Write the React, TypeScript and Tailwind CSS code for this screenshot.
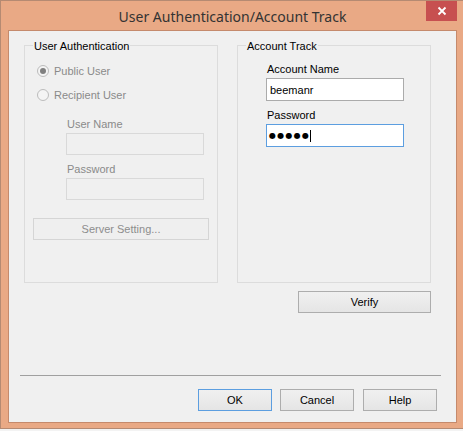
const font = { fontFamily: '"Liberation Sans", Arial, sans-serif' };

const Radio = ({ checked, label }: { checked?: boolean; label: string }) => (
  <div className="flex items-center h-[14px]">
    <span className="w-[12px] h-[12px] rounded-full border border-[#bcbcbc] bg-[#f4f4f4] flex items-center justify-center">
      {checked && <span className="w-[6px] h-[6px] rounded-full bg-[#808080]" />}
    </span>
    <span className="ml-[5px] text-[#8a8a8a]">{label}</span>
  </div>
);

const Btn = ({ label, focused, disabled, className }: { label: string; focused?: boolean; disabled?: boolean; className?: string }) => (
  <button
    className={
      "h-[22px] flex items-center justify-center border " +
      (disabled
        ? "border-[#d5d5d5] bg-[#efefef] text-[#8d8d8d] "
        : focused
        ? "border-[#5c9ee0] bg-gradient-to-b from-[#f0f0f0] to-[#e5e5e5] text-black "
        : "border-[#adadad] bg-gradient-to-b from-[#f0f0f0] to-[#e5e5e5] text-black ") +
      (className ?? "")
    }
  >
    {label}
  </button>
);

const App = () => {
  return (
    <div className="w-[463px] h-[431px] overflow-hidden bg-[#f3f3f3] text-[11px] leading-[14px]" style={font}>
      <div className="w-[465px] h-[429px] border border-[#b58a72] bg-[#e9a985] flex flex-col">
        {/* title bar */}
        <div className="relative h-[29px] flex items-center justify-center">
          <span className="text-[14px] text-[#333] pt-[2px]" style={{ fontFamily: '"Noto Sans", sans-serif' }}>
            User Authentication/Account Track
          </span>
          <div className="absolute top-0 right-[7px] w-[31px] h-[20px] bg-[#c75050] flex items-center justify-center">
            <svg width="10" height="10" viewBox="0 0 10 10">
              <path d="M1.5 1.5 L8.5 8.5 M8.5 1.5 L1.5 8.5" stroke="white" strokeWidth="1.8" />
            </svg>
          </div>
        </div>

        {/* client area */}
        <div className="ml-[7px] w-[449px] h-[393px] border border-[#c58a6c] bg-[#f0f0f0] flex flex-col">
          <div className="mt-[14px] ml-[15px] flex gap-[19px]">
            {/* User Authentication group */}
            <div className="relative w-[194px] h-[238px] border border-[#dcdcdc] flex flex-col pl-[8px]">
              <span className="absolute -top-[7px] left-[8px] px-[1px] bg-[#f0f0f0] text-black">User Authentication</span>
              <div className="ml-[4px] mt-[18px]">
                <Radio checked label="Public User" />
              </div>
              <div className="ml-[4px] mt-[10px]">
                <Radio label="Recipient User" />
              </div>
              <div className="ml-[33px] flex flex-col">
                <span className="mt-[15px] ml-[1px] text-[#8a8a8a]">User Name</span>
                <div className="mt-[2px] w-[138px] h-[22px] border border-[#d9d9d9]" />
                <span className="mt-[7px] ml-[1px] text-[#8a8a8a]">Password</span>
                <div className="mt-[2px] w-[138px] h-[22px] border border-[#d9d9d9]" />
              </div>
              <Btn label="Server Setting..." disabled className="mt-[18px] w-[176px]" />
            </div>

            {/* Account Track group */}
            <div className="relative w-[194px] h-[238px] border border-[#dcdcdc] flex flex-col pl-[28px]">
              <span className="absolute -top-[7px] left-[8px] px-[1px] bg-[#f0f0f0] text-black">Account Track</span>
              <span className="mt-[16px] ml-[1px] text-black">Account Name</span>
              <div className="mt-[2px] w-[138px] h-[23px] border border-[#ababab] bg-white flex items-center pl-[3px] text-black">
                beemanr
              </div>
              <span className="mt-[7px] ml-[1px] text-black">Password</span>
              <div className="mt-[2px] w-[138px] h-[23px] border border-[#5c9ee0] bg-white flex items-center pl-[2px] text-black">
                <span className="text-[8px] tracking-[1.3px]" style={{ fontFamily: '"DejaVu Sans", sans-serif' }}>●●●●●</span>
                <span className="w-[1px] h-[12px] bg-black" />
              </div>
            </div>
          </div>

          <div className="mt-[8px] flex justify-end pr-[25px]">
            <Btn label="Verify" className="w-[133px]" />
          </div>

          <div className="mt-[62px] ml-[11px] w-[421px] h-[1px] bg-[#a0a0a0]" />

          <div className="mt-[13px] flex justify-end pr-[19px]">
            <Btn label="OK" focused className="w-[74px]" />
            <Btn label="Cancel" className="ml-[8px] w-[74px]" />
            <Btn label="Help" className="ml-[9px] w-[74px]" />
          </div>
        </div>
      </div>
    </div>
  );
};

export default App;
